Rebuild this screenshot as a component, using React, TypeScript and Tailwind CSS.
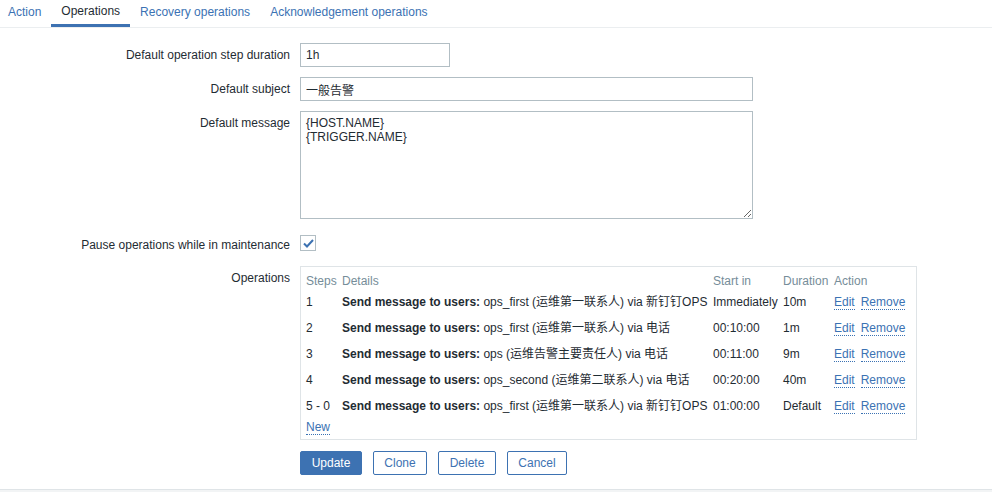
import React from "react";

const ops = [
  { step: "1", user: "ops_first (运维第一联系人)", via: "新钉钉OPS", start: "Immediately", dur: "10m" },
  { step: "2", user: "ops_first (运维第一联系人)", via: "电话", start: "00:10:00", dur: "1m" },
  { step: "3", user: "ops (运维告警主要责任人)", via: "电话", start: "00:11:00", dur: "9m" },
  { step: "4", user: "ops_second (运维第二联系人)", via: "电话", start: "00:20:00", dur: "40m" },
  { step: "5 - 0", user: "ops_first (运维第一联系人)", via: "新钉钉OPS", start: "01:00:00", dur: "Default" },
];

function Label({ children }: { children: React.ReactNode }) {
  return (
    <div className="w-[300px] shrink-0 pr-[10px] pt-[5px] text-right leading-[14px]">{children}</div>
  );
}

function Link({ children }: { children: React.ReactNode }) {
  return (
    <a className="mt-[2px] border-b border-dotted border-[#3b72b3] text-[#3b72b3] leading-[13px] cursor-pointer">{children}</a>
  );
}

export default function App() {
  const tabs = ["Action", "Operations", "Recovery operations", "Acknowledgement operations"];
  return (
    <div
      className="h-[492px] w-[992px] overflow-hidden bg-white text-[12px] text-[#1f2c33]"
      style={{ fontFamily: '"Liberation Sans", Arial, "Noto Sans CJK SC", sans-serif' }}
    >
      {/* Tabs */}
      <div className="flex h-[28px] border-b border-[#ebeef0]">
        {tabs.map((t, i) => (
          <div
            key={t}
            className={`flex items-center h-[27px] pb-[3px] ${i === 0 ? "pl-[8px] pr-[10px]" : "px-[10px]"} ${
              i === 1 ? "border-b-[3px] border-[#3d72b2] text-[#1f2c33] pb-0" : "text-[#3b72b3]"
            }`}
          >
            {t}
          </div>
        ))}
      </div>

      {/* Form */}
      <div className="pt-[15px]">
        <div className="flex">
          <Label>Default operation step duration</Label>
          <input
            readOnly
            value="1h"
            className="h-[24px] w-[150px] border border-[#b2bec4] px-[5px] text-[12px] outline-none"
            style={{ fontFamily: "inherit" }}
          />
        </div>

        <div className="mt-[10px] flex">
          <Label>Default subject</Label>
          <input
            readOnly
            value="一般告警"
            className="h-[24px] w-[453px] border border-[#b2bec4] px-[5px] text-[12px] outline-none"
            style={{ fontFamily: "inherit" }}
          />
        </div>

        <div className="mt-[10px] flex">
          <Label>Default message</Label>
          <textarea
            readOnly
            defaultValue={"{HOST.NAME}\n{TRIGGER.NAME}"}
            className="h-[108px] w-[453px] border border-[#b2bec4] px-[5px] py-[4px] text-[12px] leading-[14px] outline-none"
            style={{ fontFamily: "inherit" }}
          />
        </div>

        <div className="mt-[14px] flex">
          <Label>Pause operations while in maintenance</Label>
          <div className="pt-[2px]">
            <div className="flex h-[16px] w-[16px] items-center justify-center border border-[#b2bec4] bg-white">
              <svg width="11" height="9" viewBox="0 0 11 9" fill="none">
                <path d="M1 4.5 L4 7.5 L10 1" stroke="#3d72b2" strokeWidth="2" />
              </svg>
            </div>
          </div>
        </div>

        <div className="mt-[14px] flex">
          <Label>Operations</Label>
          <div className="w-[617px] border border-[#dfe4e7] pt-[5px] pb-[4px]">
            <div className="grid grid-cols-[36px_371px_70px_51px_1fr] text-[#768d99] h-[17px] items-center">
              <div className="pl-[5px]">Steps</div>
              <div className="pl-[5px]">Details</div>
              <div className="pl-[5px]">Start in</div>
              <div className="pl-[5px]">Duration</div>
              <div className="pl-[5px]">Action</div>
            </div>
            {ops.map((o) => (
              <div key={o.step} className="grid grid-cols-[36px_371px_70px_51px_1fr] h-[26px] items-center whitespace-nowrap">
                <div className="pl-[5px]">{o.step}</div>
                <div className="pl-[5px]">
                  <span className="font-bold">Send message to users:</span> {o.user} via {o.via}
                </div>
                <div className="pl-[5px]">{o.start}</div>
                <div className="pl-[5px]">{o.dur}</div>
                <div className="flex gap-[6px] pl-[5px]">
                  <Link>Edit</Link>
                  <Link>Remove</Link>
                </div>
              </div>
            ))}
            <div className="flex h-[16px] items-center pl-[5px]">
              <Link>New</Link>
            </div>
          </div>
        </div>

        <div className="mt-[11px] flex gap-[11px] pl-[300px]">
          <button className="h-[24px] w-[62px] rounded-[2px] border border-[#3d72b2] bg-[#3d72b2] text-white">Update</button>
          <button className="h-[24px] w-[54px] rounded-[2px] border border-[#3d72b2] bg-white text-[#3d72b2]">Clone</button>
          <button className="h-[24px] w-[58px] rounded-[2px] border border-[#3d72b2] bg-white text-[#3d72b2]">Delete</button>
          <button className="h-[24px] w-[60px] rounded-[2px] border border-[#3d72b2] bg-white text-[#3d72b2]">Cancel</button>
        </div>

        <div className="mt-[14px] h-[4px] border-t border-[#dfe4e7] bg-[#f2f4f5]" />
      </div>
    </div>
  );
}
